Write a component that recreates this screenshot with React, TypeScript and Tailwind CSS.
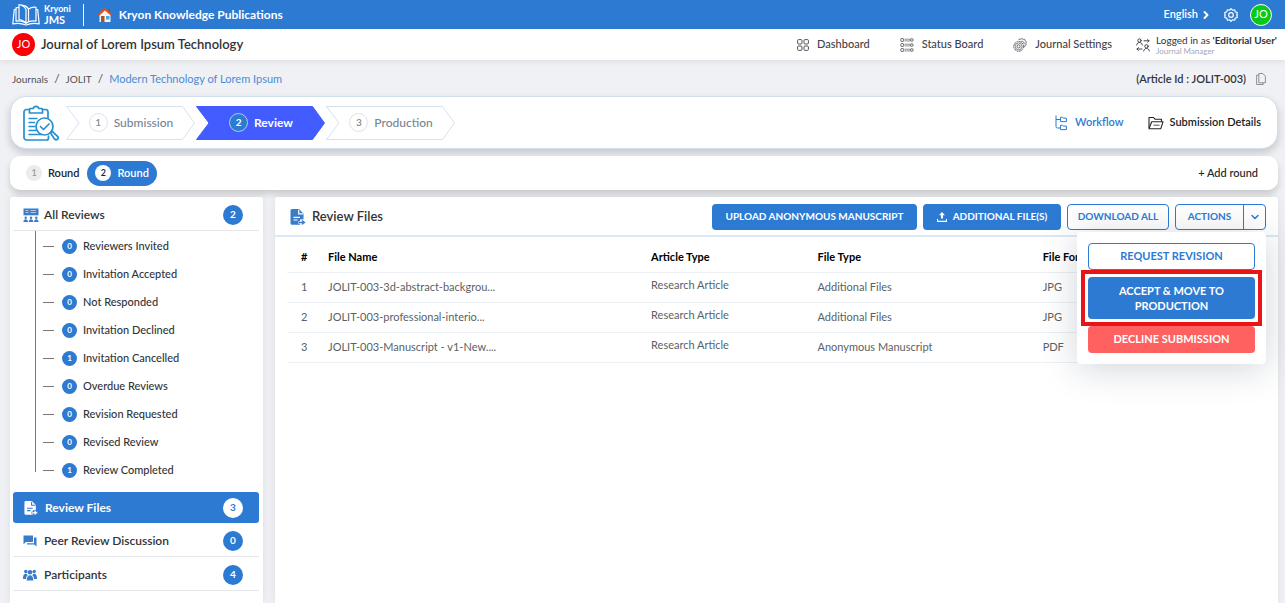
import { ReactNode } from "react";
import { ChevronDown, ChevronRight } from "lucide-react";

interface Step { nr: number; name: string; active?: boolean; }
interface ReviewFile { name: string; article: string; type: string; format: string; }

const steps: Step[] = [
  { nr: 1, name: "Submission" },
  { nr: 2, name: "Review", active: true },
  { nr: 3, name: "Production" },
];

const reviewStates: [string, number][] = [
  ["Reviewers Invited", 0],
  ["Invitation Accepted", 0],
  ["Not Responded", 0],
  ["Invitation Declined", 0],
  ["Invitation Cancelled", 1],
  ["Overdue Reviews", 0],
  ["Revision Requested", 0],
  ["Revised Review", 0],
  ["Review Completed", 1],
];

const files: ReviewFile[] = [
  { name: "JOLIT-003-3d-abstract-backgrou...", article: "Research Article", type: "Additional Files", format: "JPG" },
  { name: "JOLIT-003-professional-interio...", article: "Research Article", type: "Additional Files", format: "JPG" },
  { name: "JOLIT-003-Manuscript - v1-New....", article: "Research Article", type: "Anonymous Manuscript", format: "PDF" },
];

function BookLogo() {
  return (
    <svg className="h-6 w-7" viewBox="0 0 28 24" fill="none" stroke="currentColor" strokeWidth="1.2" strokeLinejoin="round" strokeLinecap="round" aria-hidden="true">
      <path d="M3.500 6.500H2.300L.8 20.800c4.500-.9 8.500-.9 13.200 1.200 4.700-2.100 8.700-2.100 13.200-1.200L25.700 6.500h-1.200" />
      <path d="M6.500 4.500 4 4.800v13.400c3.500-.7 7-.2 10 2 3-2.200 6.500-2.700 10-2V4.300c-3-.5-5.500.2-7.500 1.700" />
      <path d="M14 20.200c-1.500-2.200-3.800-3.200-7-3.700V1.500c3.500.7 6 2.300 7 5z" />
      <path d="M9.500 2.200c3.500.3 5.800 1.500 7 4v11.500" />
    </svg>
  );
}

function HouseIcon() {
  return (
    <svg className="h-4 w-4" viewBox="0 0 16 16" aria-hidden="true">
      <path d="M11 2h2v4h-2z" fill="#c2410c" />
      <path d="M2.500 7.500 8 2.500l5.500 5V15h-11z" fill="#f8f4ee" />
      <path d="M8 .8.8 7.600l1.300 1.200L8 3.400l5.900 5.400 1.300-1.200z" fill="#e2501f" />
      <path d="M4 9h3.500v6H4z" fill="#a9502c" />
      <path d="M9 9h3.500v3.500H9z" fill="#4aa8e8" />
    </svg>
  );
}

function GearIcon({ className }: { className: string }) {
  return (
    <svg className={className} viewBox="0 0 24 24" fill="none" stroke="currentColor" strokeWidth="2" strokeLinejoin="round" aria-hidden="true">
      <path d="M12 1.200 14.600 3.800 18.200 3l1.100 3.600 3.500 1.100-.8 3.500L23 12l-1 .8.8 3.500-3.500 1.100-1.100 3.600-3.600-.8L12 22.800l-2.600-2.600-3.600.8-1.100-3.600-3.500-1.100.8-3.500L1 12l1-.8-.8-3.500 3.500-1.100L5.800 3l3.600.8z" />
      <circle cx="12" cy="12" r="4" />
    </svg>
  );
}

function DashboardIcon() {
  return (
    <svg className="h-3 w-3" viewBox="0 0 12 12" fill="none" stroke="currentColor" strokeWidth="0.9" aria-hidden="true">
      <rect x=".6" y=".6" width="4.400" height="4.400" rx="1" />
      <rect x="7" y=".6" width="4.400" height="4.400" rx="1" />
      <rect x=".6" y="7" width="4.400" height="4.400" rx="1" />
      <rect x="7" y="7" width="4.400" height="4.400" rx="1" />
    </svg>
  );
}

function StatusIcon() {
  return (
    <svg className="h-3.5 w-3.5" viewBox="0 0 14 14" fill="none" stroke="currentColor" strokeWidth="0.8" aria-hidden="true">
      {[2, 7, 12].map((y) => (
        <g key={y}>
          <rect x=".8" y={y - 1.4} width="2.800" height="2.800" rx=".6" />
          <path d={`M4.500 ${y - 0.8}h6M4.500 ${y + 0.9}h6`} strokeWidth=".6" />
          <rect x="10.600" y={y - 1.2} width="2.400" height="2.400" rx=".6" />
        </g>
      ))}
    </svg>
  );
}

function SettingsIcon() {
  return (
    <svg className="h-3.5 w-3.5" viewBox="0 0 14 14" fill="none" stroke="currentColor" aria-hidden="true">
      <circle cx="5.600" cy="8.400" r="4.800" strokeWidth=".9" strokeDasharray="1.900 .6" />
      <circle cx="5.600" cy="8.400" r="3.400" strokeWidth=".6" />
      <circle cx="5.600" cy="8.400" r="1.600" strokeWidth=".8" />
      <path d="M5.800 2.200 6.300.9l1.500.4L8.900.5l1.300.9 1.500-.1.400 1.500 1.200.9-.5 1.400.5 1.500-1.300.8-.4 1.400-1.200.1" strokeWidth=".7" />
      <path d="M8 3.400a2.300 2.300 0 0 1 3 3" strokeWidth=".7" />
    </svg>
  );
}

function SwitchUserIcon() {
  return (
    <svg className="h-3.5 w-3.5 shrink-0" viewBox="0 0 14 14" fill="none" stroke="currentColor" strokeWidth="0.9" strokeLinecap="round" strokeLinejoin="round" aria-hidden="true">
      <circle cx="3.500" cy="2.500" r="1.700" />
      <path d="M.7 7c0-3.500 5.600-3.500 5.600 0" />
      <circle cx="10.500" cy="8.300" r="1.700" />
      <path d="M7.700 13c0-3.500 5.600-3.500 5.600 0" />
      <path d="M8 2.800h5M11.600 1.400 13 2.800l-1.400 1.400M6 11H1M2.400 9.600 1 11l1.400 1.400" />
    </svg>
  );
}

function CopyIcon() {
  return (
    <svg className="h-3 w-2.5" viewBox="0 0 10 12" fill="none" stroke="currentColor" strokeWidth="0.8" strokeLinejoin="round" aria-hidden="true">
      <path d="M2.800.5h4l2.600 2.700v6.600H2.800z" />
      <path d="M2.800 2.200H.6v9.300h6.600V9.800" />
    </svg>
  );
}

function UploadIcon() {
  return (
    <svg className="h-2.5 w-2.5" viewBox="0 0 10 10" fill="currentColor" aria-hidden="true">
      <path d="M5 0 8 3.200H6V6.500H4V3.200H2z" />
      <path d="M.5 7v2.300h9V7" fill="none" stroke="currentColor" strokeWidth="1.200" />
    </svg>
  );
}

function ChecklistIcon() {
  return (
    <svg className="h-9 w-9" viewBox="0 0 36 36" fill="none" stroke="#2490cf" strokeWidth="1.700" strokeLinecap="round" strokeLinejoin="round" aria-hidden="true">
      <path d="M6.500 4.500H3.500a2.500 2.500 0 0 0-2.500 2.500v25.500A2.500 2.500 0 0 0 3.500 35h20a2 2 0 0 0 2-2v-2" />
      <path d="M19.500 4.500h3A2.500 2.500 0 0 1 25 7v6" />
      <path d="M6.500 8V4.500a1 1 0 0 1 1-1h2.700a2.900 2.900 0 0 1 5.600 0h2.700a1 1 0 0 1 1 1V8z" />
      <path d="M6 13.500h8M6 17.500h5.500M6 21.500h5.500M6 25.500h7M6 29.500h13" strokeWidth="1.300" />
      <circle cx="21.500" cy="21.500" r="8.500" />
      <path d="m17.500 21.500 3 3 5.500-5.500" />
      <path d="m27.500 28 1.700-1.700 5.300 5a2 2 0 0 1-2.800 2.900z" />
    </svg>
  );
}

function WorkflowIcon() {
  return (
    <svg className="h-4 w-3" viewBox="0 0 12 16" fill="none" stroke="currentColor" strokeLinejoin="round" aria-hidden="true">
      <path d="M1 .5V11.500a1.500 1.500 0 0 0 1.500 1.500H5M1 4.500h4" />
      <path d="M5.500 2.300h2l.7.800h3.200v3.500H5.500zM5.500 10.300h2l.7.800h3.200v3.500H5.500z" />
    </svg>
  );
}

function FolderIcon() {
  return (
    <svg className="h-3.5 w-4" viewBox="0 0 16 14" fill="none" stroke="currentColor" strokeWidth="1.100" strokeLinejoin="round" aria-hidden="true">
      <path d="M1 12V1.500h4.500l1.500 1.700h6.500v2.500" />
      <path d="M1 12.700 3.700 5.800H15l-2.200 6.900z" />
      <path d="M5.500 9.200h6" strokeWidth=".8" />
    </svg>
  );
}

function BoardIcon() {
  return (
    <svg className="h-3.5 w-4" viewBox="0 0 16 14" fill="#3a7cc9" aria-hidden="true">
      <path d="M.5.5h15v6.800H.5z" />
      <path d="M2.500 2.500h3M2.500 4.500h3M7.500 2.500h5.500M7.500 4.500h5.500" stroke="#dbe8f7" strokeWidth=".7" />
      {[2.7, 8, 13.3].map((x) => (
        <g key={x}>
          <circle cx={x} cy="9.800" r="1.200" />
          <path d={`M${x - 2.3} 14c0-3.700 4.600-3.700 4.600 0z`} />
        </g>
      ))}
    </svg>
  );
}

function FileExportIcon({ className, hole }: { className: string; hole: string }) {
  return (
    <svg className={className} viewBox="0 0 16 16" fill="currentColor" aria-hidden="true">
      <path d="M2 0h7l4.500 4.500v6H10v5.200H2A1.500 1.500 0 0 1 .5 14.200V1.500A1.500 1.500 0 0 1 2 0z" />
      <path d="M8.700.8v4.100H13M3.500 8.300h6.500M3.500 11h4" fill="none" stroke={hole} strokeWidth="1.200" />
      <path d="M8.500 12.500h3.200v-2.300l4.300 3.300-4.300 3v-2H8.500z" stroke={hole} strokeWidth=".5" />
    </svg>
  );
}

function ChatIcon() {
  return (
    <svg className="h-3 w-3.5" viewBox="0 0 14 12" fill="#3a7cc9" aria-hidden="true">
      <path d="M.5.5h9.500v6.500H3L.5 9.300z" />
      <path d="M11 2.500h2.500v9l-2.300-2H4V8.200h7z" />
    </svg>
  );
}

function PeopleIcon() {
  return (
    <svg className="h-3 w-3.5" viewBox="0 0 14 12" fill="#3a7cc9" aria-hidden="true">
      <circle cx="2.800" cy="2.500" r="1.700" />
      <circle cx="11.200" cy="2.500" r="1.700" />
      <circle cx="7" cy="3.200" r="2.300" />
      <path d="M0 10c0-4 1-5.200 3.500-5.200L4.800 6.300C3.300 7.300 3 8.500 3 10zM14 10c0-4-1-5.200-3.500-5.200L9.200 6.300c1.500 1 1.800 2.200 1.800 3.700z" />
      <path d="M3.600 11.500c0-7 6.800-7 6.800 0z" />
    </svg>
  );
}

function NavLink({ icon, children }: { icon: ReactNode; children: ReactNode }) {
  return (
    <a href="#" className="flex items-center gap-2 text-[#3f4348]">
      {icon}
      {children}
    </a>
  );
}

function SideRow({ icon, label, count, active }: { icon: ReactNode; label: string; count: number; active?: boolean }) {
  return (
    <a href="#" className={active
      ? "flex items-center h-[31px] pl-[11px] pr-4 rounded-[3px] bg-[#2d7ad3] text-white text-xs font-bold"
      : "flex items-center h-[34px] pt-[3px] pl-[10px] pr-4 border-b border-[#e6e7ea] text-xs font-semibold"}>
      <span className="w-[21px]">{icon}</span>
      <span className="flex-1">{label}</span>
      <span className={active
        ? "flex w-5 h-5 items-center justify-center rounded-full bg-white text-[#2d7ad3] text-[10px] font-bold"
        : "flex w-5 h-5 items-center justify-center rounded-full bg-[#2d7ad3] text-white text-[10px] font-bold"}>
        {count}
      </span>
    </a>
  );
}

function StepArrow({ nr, name, active }: Step) {
  return (
    <li className="relative w-[130px] h-[34px]">
      <svg className="absolute inset-0 w-full h-full" viewBox="0 0 130 34" aria-hidden="true">
        <path d="M.5.5h116l12 16.500-12 16.500H.5L13 17z" fill={active ? "#435cff" : "#fff"} stroke={active ? "#435cff" : "#d5e2f0"} />
      </svg>
      <a href="#" className={active
        ? "relative flex h-full items-center justify-center gap-1.5 text-xs font-bold text-white"
        : "relative flex h-full items-center justify-center gap-1.5 text-xs font-medium text-[#788592]"}>
        <span className={active
          ? "flex w-[19px] h-[19px] items-center justify-center rounded-full border border-[#a9cdf5] bg-[#2d7ad3] text-[10px]"
          : "flex w-[19px] h-[19px] items-center justify-center rounded-full border border-[#dfe3e8] text-[10px]"}>
          {nr}
        </span>
        {name}
      </a>
    </li>
  );
}

export default function App() {
  return (
    <div className="min-h-screen flex flex-col bg-[#f0f1f4] text-[#303438] font-[Lato,'Open_Sans',sans-serif]">
      {/* Top bar */}
      <header className="flex items-center h-[29px] pl-3 pr-[13px] bg-[#2d7ad3] text-white">
        <a href="#" className="flex items-center gap-1">
          <BookLogo />
          <span className="flex flex-col font-bold">
            <span className="text-[9px] leading-[10px]">Kryoni</span>
            <span className="text-[11px] leading-3">JMS</span>
          </span>
        </a>
        <span className="w-px h-[22px] ml-3 mr-[13px] bg-white" />
        <a href="#" className="flex items-center gap-1.5 text-xs font-bold">
          <HouseIcon />
          Kryon Knowledge Publications
        </a>
        <div className="flex items-center ml-auto">
          <button className="flex items-center gap-0.5 text-[11px] font-semibold">
            English <ChevronRight className="h-3 w-3" strokeWidth={4} />
          </button>
          <button aria-label="Settings" className="ml-3">
            <GearIcon className="h-3.5 w-3.5" />
          </button>
          <button className="flex w-[22px] h-[22px] ml-3 items-center justify-center rounded-full border border-white bg-[#08c818] text-[11px]">JO</button>
        </div>
      </header>

      {/* Journal bar */}
      <div className="flex items-center h-[31px] pl-3 pr-2 bg-white shadow-[0_2px_6px_rgba(0,0,0,0.08)]">
        <span className="flex w-[23px] h-[23px] items-center justify-center rounded-full bg-[#fb0007] text-white text-[11px]">JO</span>
        <h1 className="ml-1.5 text-[13px] font-semibold">Journal of Lorem Ipsum Technology</h1>
        <nav className="flex items-center gap-[30px] ml-auto text-[11px] font-medium">
          <NavLink icon={<DashboardIcon />}>Dashboard</NavLink>
          <NavLink icon={<StatusIcon />}>Status Board</NavLink>
          <NavLink icon={<SettingsIcon />}>Journal Settings</NavLink>
        </nav>
        <div className="flex items-center gap-1.5 ml-6">
          <SwitchUserIcon />
          <div>
            <p className="text-[10px] leading-3">Logged in as <strong>'Editorial User'</strong></p>
            <p className="text-[8px] leading-[10px] text-[#a3a6bd]">Journal Manager</p>
          </div>
        </div>
      </div>

      {/* Breadcrumb */}
      <div className="flex items-center justify-between h-9 pt-0.5 pl-3 pr-[19px]">
        <nav className="flex items-center gap-1.5 text-[#4c5157]">
          <a href="#" className="text-[10px]">Journals</a>
          <span className="text-xs">/</span>
          <a href="#" className="text-[10px]">JOLIT</a>
          <span className="text-xs">/</span>
          <a href="#" className="text-[11px] text-[#4a8bd6]">Modern Technology of Lorem Ipsum</a>
        </nav>
        <div className="flex items-center gap-2.5 text-[11px] font-semibold">
          (Article Id : JOLIT-003)
          <button aria-label="Copy article id" className="text-[#777]"><CopyIcon /></button>
        </div>
      </div>

      <main className="flex flex-1 flex-col pl-[10px] pr-[7px]">
        {/* Stages */}
        <section className="flex items-center h-[53px] pl-3 pr-4 rounded-2xl border border-[#cfdfee] bg-white shadow-[0_4px_8px_rgba(0,0,0,0.18)]">
          <ChecklistIcon />
          <ol className="flex items-center ml-[7px]">
            {steps.map((s) => <StepArrow key={s.nr} {...s} />)}
          </ol>
          <div className="flex items-center gap-6 ml-auto text-[11px] font-semibold">
            <a href="#" className="flex items-center gap-2 text-[#2d7ad3]"><WorkflowIcon />Workflow</a>
            <a href="#" className="flex items-center gap-1.5 text-[#202327]"><FolderIcon />Submission Details</a>
          </div>
        </section>

        {/* Rounds */}
        <section className="flex items-center h-[34px] mt-[7px] pl-2 pr-5 rounded-[10px] bg-white text-[11px] font-semibold text-[#202327] shadow-[0_4px_6px_rgba(0,0,0,0.16)]">
          <button className="flex items-center gap-1.5 px-2">
            <span className="flex w-4 h-4 items-center justify-center rounded-full bg-[#ececec] text-[9px] text-[#999]">1</span>
            Round
          </button>
          <button className="flex items-center h-[25px] gap-1.5 px-2 rounded-full bg-[#2d7ad3] text-white">
            <span className="flex w-4 h-4 items-center justify-center rounded-full bg-white text-[9px] text-[#202327]">2</span>
            Round
          </button>
          <button className="ml-auto font-medium">+ Add round</button>
        </section>

        <div className="flex flex-1 gap-3 mt-[7px]">
          {/* Sidebar */}
          <aside className="w-[253px] shrink-0 px-[3px] pr-1 rounded-t-[3px] bg-white shadow-[0_0_8px_rgba(0,0,0,0.08)]">
            <SideRow icon={<BoardIcon />} label="All Reviews" count={2} />
            <ul className="ml-[22px] h-[241px] border-l border-[#777]">
              {reviewStates.map(([label, count]) => (
                <li key={label}>
                  <a href="#" className="flex items-center h-7 pl-[7px] pt-0.5 text-[11px] font-medium">
                    <span className="w-[11px] h-px mr-2 bg-[#777]" />
                    <span className="flex w-[15px] h-[15px] mr-1.5 items-center justify-center rounded-full bg-[#2d7ad3] text-white text-[8px] font-bold">{count}</span>
                    {label}
                  </a>
                </li>
              ))}
            </ul>
            <div className="mt-5">
              <SideRow icon={<FileExportIcon className="h-3.5 w-3.5" hole="#2d7ad3" />} label="Review Files" count={3} active />
              <SideRow icon={<ChatIcon />} label="Peer Review Discussion" count={0} />
              <SideRow icon={<PeopleIcon />} label="Participants" count={4} />
            </div>
          </aside>

          {/* Files */}
          <section className="flex-1 rounded-t-[3px] bg-white shadow-[0_0_8px_rgba(0,0,0,0.08)]">
            <div className="flex items-center h-10 pt-px pl-[15px] pr-3 border-b-2 border-[#dce8f2]">
              <span className="text-[#3a7cc9]"><FileExportIcon className="h-4 w-4" hole="#fff" /></span>
              <h2 className="ml-1.5 text-[13px] font-semibold">Review Files</h2>
              <div className="flex gap-1.5 ml-auto text-[10px] font-bold">
                <button className="h-[26px] w-[205px] rounded bg-[#2d7ad3] text-white">UPLOAD ANONYMOUS MANUSCRIPT</button>
                <button className="flex h-[26px] w-[138px] items-center justify-center gap-1.5 rounded bg-[#2d7ad3] text-white">
                  <UploadIcon />
                  ADDITIONAL FILE(S)
                </button>
                <button className="h-[26px] w-[102px] rounded border border-[#2d7ad3] text-[#2d7ad3]">DOWNLOAD ALL</button>
                <div className="relative flex h-[26px] w-[91px] rounded border border-[#2d7ad3] text-[#2d7ad3]">
                  <button className="flex-1">ACTIONS</button>
                  <button aria-label="Open actions" className="flex w-[22px] items-center justify-center border-l border-[#2d7ad3]">
                    <ChevronDown className="h-3 w-3" strokeWidth={3} />
                  </button>
                  <div className="absolute top-[27px] -right-px z-10 flex w-[189px] flex-col gap-[7px] rounded bg-white px-[11px] py-[11px] text-[11px] font-bold shadow-[0_4px_36px_rgba(40,60,80,0.22)]">
                    <button className="h-[27px] rounded border border-[#2d7ad3] bg-white">REQUEST REVISION</button>
                    <div className="relative flex">
                      <button className="flex-1 px-5 py-1.5 rounded bg-[#2d7ad3] text-white leading-[15px]">ACCEPT &amp; MOVE TO PRODUCTION</button>
                      <span className="pointer-events-none absolute -inset-[7px] border-4 border-[#e81416]" />
                    </div>
                    <button className="h-[27px] rounded bg-[#ff6161] text-white">DECLINE SUBMISSION</button>
                  </div>
                </div>
              </div>
            </div>

            <div className="px-3 pt-[5px]">
              <table className="w-full table-fixed text-left text-[11px]">
                <thead>
                  <tr className="h-[30px] border-b border-[#edf0f4] text-black">
                    <th className="w-[41px] pl-3.5">#</th>
                    <th className="w-[33%]">File Name</th>
                    <th className="w-[17%]">Article Type</th>
                    <th className="w-[23%]">File Type</th>
                    <th>File Format</th>
                  </tr>
                </thead>
                <tbody className="text-[#5b5f64]">
                  {files.map((f, i) => (
                    <tr key={f.name} className="h-[30px] border-b border-[#edf0f4]">
                      <td className="pl-3.5">{i + 1}</td>
                      <td>{f.name}</td>
                      <td className="pb-1">{f.article}</td>
                      <td>{f.type}</td>
                      <td>{f.format}</td>
                    </tr>
                  ))}
                </tbody>
              </table>
            </div>
          </section>
        </div>
      </main>
    </div>
  );
}
